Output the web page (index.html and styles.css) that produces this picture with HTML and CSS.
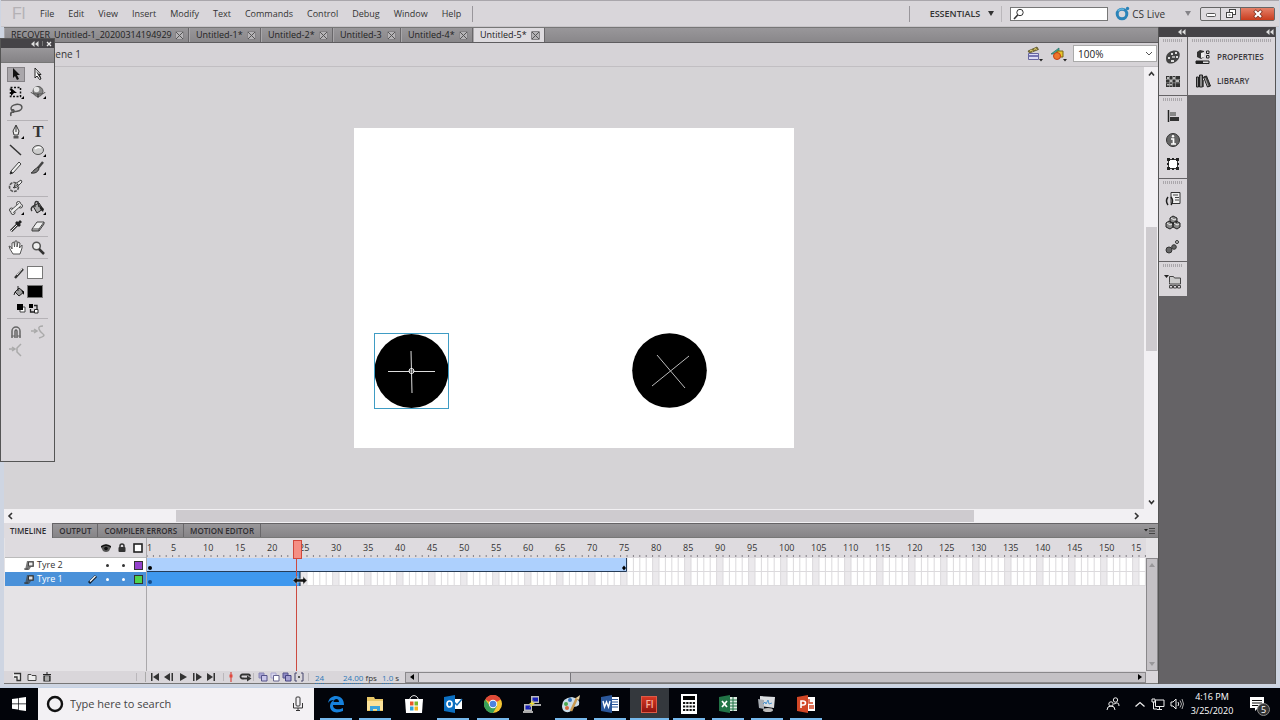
FILE: index.html
```html
<!DOCTYPE html>
<html lang="en">
<head>
<meta charset="utf-8">
<title>Untitled-5</title>
<link rel="stylesheet" href="styles.css">
</head>
<body>
<div class="app">
  <header class="menubar">
    <span class="brand">Fl</span>
    <nav class="menus">
      <button>File</button><button>Edit</button><button>View</button><button>Insert</button><button>Modify</button><button>Text</button><button>Commands</button><button>Control</button><button>Debug</button><button>Window</button><button>Help</button>
    </nav>
    <i class="rule"></i>
    <span class="spacer"></span>
    <i class="rule"></i>
    <button class="workspace">ESSENTIALS <i class="caret"></i></button>
    <i class="rule faint"></i>
    <label class="help-search">
      <svg width="12" height="12" viewBox="0 0 12 12" fill="none" stroke="#333"><circle cx="7" cy="4.500" r="3.200"/><path d="M4.700 7 1 11" stroke-width="1.600"/></svg>
      <input type="text" aria-label="Search help">
    </label>
    <button class="cslive">
      <svg width="15" height="15" viewBox="0 0 15 15" fill="none"><circle cx="7" cy="8" r="4.800" stroke="#2b83b8" stroke-width="3"/><path d="M3 5a5 5 0 0 1 6-1.500" stroke="#63b4dc" stroke-width="1.500"/><circle cx="12.500" cy="2.500" r="1.700" fill="#2b83b8"/></svg>
      CS Live <i class="caret grey"></i></button>
    <div class="winbtns">
      <button aria-label="Minimize"><svg width="12" height="10" viewBox="0 0 12 10"><rect x="1.500" y="4.500" width="9" height="3" rx="1" fill="#fff" stroke="#555"/></svg></button>
      <button aria-label="Restore"><svg width="12" height="10" viewBox="0 0 12 10" fill="#fff" stroke="#444"><rect x="4.500" y=".5" width="6" height="5"/><rect x="1.500" y="3.500" width="6" height="5"/><path d="M3.500 6h2"/></svg></button>
      <button class="close" aria-label="Close"><svg width="12" height="10" viewBox="0 0 12 10"><path d="m2.500 1.500 7 7m0-7-7 7" stroke="#7a3020" stroke-width="3.600"/><path d="m3 2 6 6m0-6-6 6" stroke="#fff" stroke-width="2.200"/></svg></button>
    </div>
  </header>

  <div class="workarea">
    <main class="document">
      <div class="tabs">
        <div class="tab wide">RECOVER_Untitled-1_20200314194929<button aria-label="Close tab"></button></div>
        <div class="tab">Untitled-1*<button aria-label="Close tab"></button></div>
        <div class="tab">Untitled-2*<button aria-label="Close tab"></button></div>
        <div class="tab short">Untitled-3<button aria-label="Close tab"></button></div>
        <div class="tab">Untitled-4*<button aria-label="Close tab"></button></div>
        <div class="tab active">Untitled-5*<button aria-label="Close tab"></button></div>
      </div>
      <div class="editbar">
        <span class="scene">Scene 1</span>
        <span class="spacer"></span>
        <button aria-label="Edit scene"><svg width="17" height="16" viewBox="0 0 17 16"><path d="m1 5 9-4 1.500 2.500-9 3.500z" fill="#8b7c35" stroke="#4e461e" stroke-width=".7"/><path d="m3 5 1.500-1 1 1.500M7 3.500 8.500 2.500l1 1.500" stroke="#e5d778" fill="none"/><path d="M1.500 7.500h10v6h-10z" fill="#dcdcf4" stroke="#6665a0"/><path d="M2 10h9" stroke="#7776b4" stroke-width="2"/><path d="M12 13h4l-2 2.500z" fill="#222"/></svg></button>
        <button aria-label="Edit symbols"><svg width="17" height="16" viewBox="0 0 17 16"><path d="m1 8 8-6v6z" fill="#3fa99b" stroke="#236b62" stroke-width=".7"/><path d="M7 5h6v6H7z" fill="#e9c52c" stroke="#7b6615"/><circle cx="7" cy="10" r="3.500" fill="#ee762c" stroke="#c33e16"/><path d="M13 13h4l-2 2.500z" fill="#222"/></svg></button>
        <select class="zoom" aria-label="Zoom"><option>100%</option></select>
      </div>
      <div class="viewport">
        <div class="pasteboard">
          <div class="canvas">
            <svg class="tyre tyre-one" width="75" height="76" viewBox="0 0 75 76"><circle cx="37.500" cy="38" r="37"/><rect x=".5" y=".5" width="74" height="75" fill="none" stroke="#3f9cc4"/><path d="M14 38.500h47M37 18l1 42" stroke="#ddd"/><circle cx="37.500" cy="38" r="2.500" stroke="#fff"/><path d="M37.500 35v6M35 38h5" stroke="#fff" stroke-width=".7"/></svg>
            <svg class="tyre tyre-two" width="75" height="76" viewBox="0 0 75 76"><circle cx="37.500" cy="37.500" r="37.300"/><path d="m20 53 37-30M25 22l28 33" stroke="#bbb"/></svg>
          </div>
        </div>
        <div class="vscroll"><svg width="11" height="14" viewBox="0 0 11 14"><path d="m3 8.500 2.500-3 2.500 3" fill="none" stroke="#333" stroke-width="1.600"/></svg><i></i><svg class="end" width="11" height="14" viewBox="0 0 11 14"><path d="m3 5.500 2.500 3 2.500-3" fill="none" stroke="#333" stroke-width="1.600"/></svg></div>
        <div class="hscroll"><svg width="14" height="12" viewBox="0 0 14 12"><path d="M8 3 5 6l3 3" fill="none" stroke="#333" stroke-width="1.600"/></svg><i></i><svg class="end" width="14" height="12" viewBox="0 0 14 12"><path d="m5 3 3 3-3 3" fill="none" stroke="#333" stroke-width="1.600"/></svg></div>
      </div>

      <section class="timeline">
        <div class="panel-tabs">
          <button class="active">TIMELINE</button><button>OUTPUT</button><button>COMPILER ERRORS</button><button>MOTION EDITOR</button>
          <span class="spacer"></span>
          <svg width="12" height="8" viewBox="0 0 12 8"><path d="M0 2h4L2 4.500z" fill="#222"/><path d="M5 1.500h6M5 4h6M5 6.500h6" stroke="#444"/></svg>
        </div>
        <div class="frames">
          <div class="layers">
            <div class="layer-head">
              <svg width="10" height="10" viewBox="0 0 10 10"><path d="M0 4Q5-1 10 4L8 8Q5 10 2 8z" fill="#555"/><path d="M0 4Q5 0 10 4" fill="none" stroke="#111" stroke-width="1.400"/><circle cx="5" cy="5.500" r="1.800" fill="#111"/></svg>
              <svg width="10" height="10" viewBox="0 0 10 10"><path d="M3 5V3a2 2 0 0 1 4 0v2" fill="none" stroke="#333" stroke-width="1.500"/><rect x="1.500" y="4" width="7" height="5" rx="1" fill="#333"/></svg>
              <svg width="10" height="10" viewBox="0 0 10 10"><rect x="1" y="1" width="8" height="8" fill="#fff" stroke="#222" stroke-width="1.600"/></svg>
            </div>
            <div class="layer"><svg width="12" height="11" viewBox="0 0 12 11"><path d="M4 1h7v6H8l-2 3H2z" fill="#777"/><path d="M5.500 2H10v4H5.500z" fill="#eee" stroke="#444"/><path d="M1 9h4" stroke="#444"/></svg><span>Tyre 2</span><i class="dot"></i><i class="dot"></i><i class="swatch purple"></i></div>
            <div class="layer selected"><svg width="12" height="11" viewBox="0 0 12 11"><path d="M4 1h7v6H8l-2 3H2z" fill="#435a70"/><path d="M5.500 2H10v4H5.500z" fill="#ddd" stroke="#333"/><path d="M1 9h4" stroke="#333"/></svg><span>Tyre 1</span><svg class="pencil" width="12" height="11" viewBox="0 0 12 11"><path d="m2 9 7-7" stroke="#17232f" stroke-width="3"/><path d="m3 7.500 5.500-5.500" stroke="#fff" stroke-width="1.200"/></svg><i class="dot"></i><i class="dot"></i><i class="swatch green"></i></div>
          </div>
          <div class="tracks">
            <div class="ruler"><span class="first">1</span><span>5</span><span>10</span><span>15</span><span>20</span><span>25</span><span>30</span><span>35</span><span>40</span><span>45</span><span>50</span><span>55</span><span>60</span><span>65</span><span>70</span><span>75</span><span>80</span><span>85</span><span>90</span><span>95</span><span>100</span><span>105</span><span>110</span><span>115</span><span>120</span><span>125</span><span>130</span><span>135</span><span>140</span><span>145</span><span>150</span><span>15</span></div>
            <svg class="ticks" width="100%" height="4"><defs><pattern id="ticks" width="32" height="4" patternUnits="userSpaceOnUse"><path d="M6.400 1v2M12.800 1v2M19.200 1v2M25.600 1v2M32 1v2M0 1v2" stroke="#77747a" stroke-width=".9"/></pattern></defs><rect width="100%" height="4" fill="url(#ticks)"/></svg>
            <svg class="cells" width="100%" height="28"><defs><pattern id="cells" width="32" height="14" patternUnits="userSpaceOnUse"><path d="M0 0h32v14H0z" fill="#fff"/><path d="M25.600 0H32v14h-6.400z" fill="#ebe9ec"/><path d="M6.400 0v14M12.800 0v14M19.200 0v14M25.600 0v14M32 0v14M0 0v14M0 13.500h32" stroke="#dcdadd"/></pattern></defs><rect width="100%" height="28" fill="url(#cells)"/><rect width="480" height="14" fill="#add0fd"/><path d="M0 13.500h479.500V0" fill="none" stroke="#263c57"/><rect y="14" width="153" height="14" fill="#3f98ee"/><circle cx="3" cy="10" r="2"/><circle cx="3" cy="24" r="2" fill="#174c86"/><path d="m477 7.500 2 2.500-2 2.500-2-2.500z"/><path d="M153 14v14" stroke="#122b45"/></svg>
            <i class="playhead"></i>
            <svg class="cursor" width="14" height="9" viewBox="0 0 14 9"><path d="m0 4.500 4-4V3h6V.5l4 4-4 4V6H4v2.500z" fill="#111" stroke="#eee" stroke-width=".5"/></svg>
          </div>
          <div class="frame-scroll"><i></i><i class="down"></i></div>
        </div>
        <div class="controls">
          <div class="layer-tools">
            <button aria-label="New layer"><svg width="10" height="10" viewBox="0 0 10 10"><path d="M1 1.500h7.500v7H5L1 5z" fill="#eee"/><path d="M2 1.500h6.500v7H5V5H2" fill="none" stroke="#333" stroke-width="1.300"/></svg></button>
            <button aria-label="New folder"><svg width="10" height="10" viewBox="0 0 10 10"><path d="M1 2.500h3l1 1h4v5H1z" fill="#eee" stroke="#444"/></svg></button>
            <button aria-label="Delete layer"><svg width="10" height="10" viewBox="0 0 10 10"><path d="M1 2.500h8M4 1h2M2 4h6v5H2z" fill="#777" stroke="#222" stroke-width="1.200"/><path d="M4 4v5M6 4v5" stroke="#ddd"/></svg></button>
            <span class="spacer"></span><i class="rule faint"></i>
          </div>
          <div class="play">
            <button aria-label="First frame"><svg width="10" height="10" viewBox="0 0 10 10"><path d="M1 1h1.500v8H1zM9 1v8L3 5z"/></svg></button>
            <button aria-label="Step back"><svg width="10" height="10" viewBox="0 0 10 10"><path d="M6 1v8L0 5zM7.500 1H9v8H7.500z"/></svg></button>
            <button aria-label="Play"><svg width="10" height="10" viewBox="0 0 10 10"><path d="m2 1 7 4-7 4z"/></svg></button>
            <button aria-label="Step forward"><svg width="10" height="10" viewBox="0 0 10 10"><path d="M1 1h1.500v8H1zM4 1l6 4-6 4z"/></svg></button>
            <button aria-label="Last frame"><svg width="10" height="10" viewBox="0 0 10 10"><path d="m1 1 6 4-6 4zM7.500 1H9v8H7.500z"/></svg></button>
          </div>
          <i class="rule faint"></i>
          <button aria-label="Center frame"><svg width="8" height="10" viewBox="0 0 8 10"><path d="M4 0v10" stroke="#d62a20"/><path d="M2.500 2.500h3v3h-3z" fill="#e0493f"/></svg></button>
          <button aria-label="Loop"><svg width="13" height="10" viewBox="0 0 13 10"><path d="M5 6.500H3.500a2 2 0 0 1 0-4H9.500q1.500 0 1.500 2" fill="none" stroke="#333" stroke-width="1.800"/><path d="M5 6.500h4" stroke="#333" stroke-width="1.800"/><path d="m8 3.500 4.500 3L8 9.500z" fill="#333"/></svg></button>
          <i class="rule faint"></i>
          <div class="onion">
            <button aria-label="Onion skin"><svg width="10" height="10" viewBox="0 0 10 10"><path d="M1 1h5v5H1z" fill="#a6a2d3" stroke="#8886b5"/><path d="M3.500 3.500H9V9H3.500z" fill="#c9c6ea" stroke="#55538a"/></svg></button>
            <button aria-label="Onion outlines"><svg width="10" height="10" viewBox="0 0 10 10"><path d="M1 1h5v5H1z" fill="#d8d6ee" stroke="#a8a6cc"/><path d="M3.500 3.500H9V9H3.500z" fill="#fff" stroke="#67658f"/></svg></button>
            <button aria-label="Edit multiple"><svg width="10" height="10" viewBox="0 0 10 10"><path d="M1 1h5v5H1z" fill="#8f8bc6" stroke="#55538a"/><path d="M3.500 3.500H9V9H3.500z" fill="#a6a2d3" stroke="#444280"/></svg></button>
            <button aria-label="Modify markers"><svg width="10" height="10" viewBox="0 0 10 10"><path d="M3 1H1v8h2M7 1h2v8H7" fill="none" stroke="#45446d"/><path d="M4 4h2v2H4z" fill="#555"/></svg></button>
          </div>
          <i class="rule faint"></i>
          <span class="stat now"><b>24</b></span><span class="stat fps"><b>24.00</b> fps</span><span class="stat time"><b>1.0</b> s</span>
          <div class="track-scroll"><button aria-label="Scroll left"><svg width="10" height="8" viewBox="0 0 10 8"><path d="M7 1v6L3 4z"/></svg></button><i></i><svg class="end" width="10" height="8" viewBox="0 0 10 8"><path d="M3 1v6l4-3z"/></svg></div>
        </div>
      </section>
    </main>

    <aside class="dock">
      <div class="dock-head"><span><svg width="8" height="6" viewBox="0 0 8 6"><path d="M3.500 0v6L0 3zM7.500 0v6L4 3z" fill="#ddd"/></svg></span><span><svg width="8" height="6" viewBox="0 0 8 6"><path d="M3.500 0v6L0 3zM7.500 0v6L4 3z" fill="#ddd"/></svg></span></div>
      <div class="dock-cols">
        <div class="icon-col">
          <div class="group">
            <button aria-label="Color"><svg width="16" height="16" viewBox="0 0 16 16"><path d="M1 9c0-5 5-7.500 9-7.500 5 0 5.500 4 4 7.500s-5 5.500-9 5.500C2 14.500 1 12 1 9z" fill="#444"/><path d="M3 8h2v2H3zM6 4h2v2H6zM10 3h2v2h-2zM11 7h2v2h-2zM6 11h3v2H6z" fill="#ddd"/><path d="M7 7h3v2H7z" fill="#aaa"/></svg></button>
            <button aria-label="Swatches"><svg width="16" height="16" viewBox="0 0 16 16"><path d="M1 3h14v11H1z" fill="#333"/><path d="M2 4h2v2H2zM8 4h2v2H8zM5 7h2v2H5zM11 7h3v2h-3zM2 11h5v1.500H2z" fill="#bbb"/><path d="M4.500 3v11M7.500 3v11M10.500 3v11M1 6.500h14M1 9.800h14" stroke="#999" stroke-width=".7"/></svg></button>
          </div>
          <div class="group">
            <button aria-label="Align"><svg width="16" height="16" viewBox="0 0 16 16"><path d="M3.500 2v12" stroke="#222" stroke-width="1.500"/><path d="M5 4h6v4H5z" fill="#888"/><path d="M5 9h9v4H5z" fill="#333"/></svg></button>
            <button aria-label="Info"><svg width="16" height="16" viewBox="0 0 16 16"><circle cx="8" cy="8" r="6.500" fill="#666" stroke="#333"/><path d="M6 7h2.500v5M6 12h5" stroke="#fff" stroke-width="1.700" fill="none"/><circle cx="8" cy="4.300" r="1.200" fill="#fff"/></svg></button>
            <button aria-label="Transform"><svg width="16" height="16" viewBox="0 0 16 16"><path d="M3.500 3.500h9v9h-9z" fill="#fff" stroke="#333"/><path d="M2 2h3v3H2zM11 2h3v3h-3zM2 11h3v3H2zM11 11h3v3h-3zM7 2h2v2H7zM7 12h2v2H7zM2 7h2v2H2zM12 7h2v2h-2z" fill="#222"/></svg></button>
          </div>
          <div class="group">
            <button aria-label="Code snippets"><svg width="16" height="16" viewBox="0 0 16 16"><path d="M6 1.500h9v11H6z" fill="#eee" stroke="#333"/><path d="M8 4h5M10 6.500h4M10 9h4" stroke="#444"/><path d="M3 6Q0 10 3 14M6 6q3 4 0 8" stroke="#222" stroke-width="1.500" fill="none"/></svg></button>
            <button aria-label="Components"><svg width="16" height="16" viewBox="0 0 16 16" stroke="#222" fill="#888"><path d="m5 3 3-2 4 2v4L9 9 5 7zM1 8l3-2 4 2v4l-3 2-4-2zM8 8l3-2 4 2v4l-3 2-4-2z"/><path d="m6 3 3 2 2-1M2 8l3 2 2-1m2-1 3 2 2-1" stroke="#eee"/></svg></button>
            <button aria-label="Motion presets"><svg width="16" height="16" viewBox="0 0 16 16" fill="#666" stroke="#333"><circle cx="4" cy="11" r="3"/><circle cx="9" cy="8" r="2.300"/><circle cx="12" cy="3" r="1.500" fill="#ccc"/></svg></button>
          </div>
          <div class="group">
            <button aria-label="Project"><svg width="18" height="16" viewBox="0 0 18 16"><path d="M0 1h5L2.500 4z" fill="#222"/><path d="M5.500 8.500v-6h4l1 1.500h6v6h-11z" fill="#ccc" stroke="#444"/><path d="M5.500 11.500h3v2.500h-3zM9.500 11.500h3v2.500h-3zM13.500 11.500h3v2.500h-3z" fill="none" stroke="#444"/></svg></button>
          </div>
        </div>
        <div class="name-col">
          <div class="group">
            <button><svg width="16" height="16" viewBox="0 0 16 16"><path d="m2 3 3-2 4 1v6L6 10 2 8z" fill="#333"/><path d="m6 4 3-1v5L6 9z" fill="#eee"/><path d="M11.500 2h2.500v2.500h-2.500zM11.500 6.500H14V9h-2.500zM1 12h13v2.500H1z" fill="#ddd" stroke="#222"/><path d="M1 12h7v2.500H1z" fill="#222"/></svg>PROPERTIES</button>
            <button><svg width="16" height="16" viewBox="0 0 16 16"><path d="M1.500 4h2v10h-2zM4.500 2h3v12h-3z" fill="#888" stroke="#222"/><path d="m8.500 4 3-1 4 10-3 1z" fill="#444" stroke="#222"/><path d="M8 7v7" stroke="#333" stroke-width="1.500"/><path d="m10 5 3 8" stroke="#aaa"/></svg>LIBRARY</button>
          </div>
        </div>
      </div>
    </aside>
  </div>

  <aside class="tools">
    <div class="tools-head"><svg width="8" height="6" viewBox="0 0 8 6"><path d="M3.500 0v6L0 3zM7.500 0v6L4 3z" fill="#ddd"/></svg><i></i><svg width="6" height="6" viewBox="0 0 6 6"><path d="m1 1 4 4m0-4L1 5" stroke="#eee" stroke-width="1.300"/></svg></div>
    <div class="tools-grip"></div>
    <div class="toolset">
      <button class="on" aria-label="Selection"><svg width="16" height="16" viewBox="0 0 16 16"><path d="m5 2 7 7H9l2 4-2 1-2-4-2 2z" fill="#111"/></svg></button>
      <button aria-label="Subselection"><svg width="16" height="16" viewBox="0 0 16 16"><path d="m5 2 6 6.500H9l2 4.500-1.500.5L7 10l-2 2z" fill="#fff" stroke="#222"/><path d="m6 5 4 4 1 4-3-4z" fill="#222"/></svg></button>
      <button aria-label="Free transform"><svg width="16" height="16" viewBox="0 0 16 16"><path d="M2.500 3.500h10v9h-10z" fill="none" stroke="#111" stroke-width="1.500" stroke-dasharray="2 1.500"/><path d="m3 4 6 5H6l-3 3z"/><path d="M13 15h3v-3z"/></svg></button>
      <button aria-label="3D rotation"><svg width="16" height="16" viewBox="0 0 16 16"><circle cx="8" cy="7.500" r="5" fill="#888" stroke="#555"/><circle cx="6.500" cy="5.500" r="2.800" fill="#e4e4e4"/><path d="M1 8q0 2 7 2t7-2" fill="none" stroke="#555"/><path d="M8 10v4" stroke="#333"/><path d="M13 15h3v-3z"/></svg></button>
      <button aria-label="Lasso"><svg width="16" height="16" viewBox="0 0 16 16" fill="none" stroke="#555" stroke-width="1.500"><ellipse cx="8.500" cy="6" rx="5.500" ry="3.500" transform="rotate(-10 8 6)"/><path d="M3 8q3-1 3 1t-2 1q-2 1-1 4"/></svg></button>
    </div>
    <div class="toolset">
      <button aria-label="Pen"><svg width="16" height="16" viewBox="0 0 16 16"><path d="M8 1 5 7l1 4h4l1-4z" fill="#eee" stroke="#333"/><path d="M8 2v6" stroke="#333"/><path d="M5.500 12h5v2.500h-5z" fill="#555"/><path d="M13 15h3v-3z"/></svg></button>
      <button class="type" aria-label="Text">T</button>
      <button aria-label="Line"><svg width="16" height="16" viewBox="0 0 16 16"><path d="m2 3 11 10" stroke="#333" stroke-width="1.500"/></svg></button>
      <button aria-label="Oval"><svg width="16" height="16" viewBox="0 0 16 16"><ellipse cx="8" cy="8" rx="5.500" ry="4.500" fill="#ccc" stroke="#555"/><path d="M5 7q3-3 6-1" stroke="#fff" fill="none" stroke-width="1.500"/><path d="M13 15h3v-3z"/></svg></button>
      <button aria-label="Pencil"><svg width="16" height="16" viewBox="0 0 16 16"><path d="m3 11 8-9 2 2-8 9-3 1z" fill="#eee" stroke="#444"/><path d="m2 14 1-3 2 2z" fill="#222"/></svg></button>
      <button aria-label="Brush"><svg width="16" height="16" viewBox="0 0 16 16"><path d="m13 2-5 6" stroke="#444" stroke-width="2.500"/><path d="M8 7 4 10q-1 2-3 3 6 1 8-4z" fill="#777" stroke="#333"/><path d="M13 15h3v-3z"/></svg></button>
      <button aria-label="Deco"><svg width="16" height="16" viewBox="0 0 16 16"><path d="m7 6 6-4 1 2-5 5-3 1z" fill="#eee" stroke="#444"/><circle cx="6" cy="9" r="4.500" fill="none" stroke="#555" stroke-width="1.600" stroke-dasharray="3 1"/><path d="m5 10 5-4" stroke="#333"/></svg></button>
    </div>
    <div class="toolset">
      <button aria-label="Bone"><svg width="16" height="16" viewBox="0 0 16 16"><g fill="#eee" stroke="#444"><circle cx="3.500" cy="10" r="2"/><circle cx="5" cy="12.500" r="2"/><circle cx="10.500" cy="3.500" r="2"/><circle cx="12.500" cy="6" r="2"/></g><path d="m4 11.500 8-7" stroke="#444" stroke-width="4"/><path d="m3.500 12 9-8" stroke="#eee" stroke-width="2.500"/><path d="M13 15h3v-3z"/></svg></button>
      <button aria-label="Paint bucket"><svg width="16" height="16" viewBox="0 0 16 16"><path d="m3 6 6-3 4 6-6 4z" fill="#aaa" stroke="#222"/><path d="M5 7Q4 0 8 2l1 5M3 6q-3 3-1 5" fill="none" stroke="#333" stroke-width="1.400"/><path d="m9 5 5 4-1 3-3-3z" fill="#222"/><path d="M13 15h3v-3z"/></svg></button>
      <button aria-label="Eyedropper"><svg width="16" height="16" viewBox="0 0 16 16"><path d="m3 13 7-7" stroke="#333" stroke-width="3"/><path d="m3 13 6-6" stroke="#eee"/><path d="m8 4 4 4M10 6l3-3" stroke="#222" stroke-width="2.800"/></svg></button>
      <button aria-label="Eraser"><svg width="16" height="16" viewBox="0 0 16 16"><path d="m2 11 5-7h7l-5 7z" fill="#eee" stroke="#444"/><path d="M2 11v2h7v-2m0 2 5-7V4" fill="#999" stroke="#444"/></svg></button>
    </div>
    <div class="toolset">
      <button aria-label="Hand"><svg width="16" height="16" viewBox="0 0 16 16"><path d="M5 14 2 9 1 6l2 1 1 2V3l2-1 .5 5L7 1h2v6l1-5 2 1-.5 5L14 5v3l-2 6z" fill="#fff" stroke="#555"/></svg></button>
      <button aria-label="Zoom"><svg width="16" height="16" viewBox="0 0 16 16"><circle cx="6.500" cy="6" r="3.800" fill="#eee" stroke="#555" stroke-width="1.500"/><path d="m9 9 5 5" stroke="#333" stroke-width="2.500"/></svg></button>
    </div>
    <div class="toolset colors">
      <div><svg width="12" height="14" viewBox="0 0 12 14"><path d="m2 12 8-9" stroke="#333" stroke-width="2.400"/><path d="m4 9 5-6" stroke="#eee"/></svg><i class="well white"></i></div>
      <div><svg width="12" height="14" viewBox="0 0 12 14"><path d="m2 7 4-4 5 4-5 4z" fill="#999" stroke="#222"/><path d="M5 6V1M2 7l-1 3" stroke="#222"/><path d="m8 5 3 2v3z"/></svg><i class="well black"></i></div>
      <div class="swap"><svg width="10" height="12" viewBox="0 0 10 12"><path d="M4 4h5v5H4z" fill="#fff" stroke="#444"/><path d="M1 1h6v6H1z"/></svg><svg width="10" height="12" viewBox="0 0 10 12"><path d="M0 1h4v4H0z"/><path d="M5.500 6.500H9V10H5.500z" fill="#fff" stroke="#222"/><path d="M5 2.500h3V6M1.500 6v3H5" fill="none" stroke="#222" stroke-width="1.300"/></svg></div>
    </div>
    <div class="toolset options">
      <button aria-label="Snap"><svg width="16" height="16" viewBox="0 0 16 16"><path d="M4 14V7a4 4 0 0 1 8 0v7M7 14V7q1-2 2 0v7" fill="none" stroke="#666" stroke-width="1.500"/><path d="M3.500 12H7m2 0h3.500" stroke="#666"/></svg></button>
      <button aria-label="Smooth"><svg width="16" height="16" viewBox="0 0 16 16"><path d="M1 7h5M4 5l3 2-3 2M13 2Q8 2 9 5t4 5-4 4" fill="none" stroke="#aaa" stroke-width="1.500"/></svg></button>
      <button aria-label="Straighten"><svg width="16" height="16" viewBox="0 0 16 16"><path d="M1 7h5M4 5l3 2-3 2M13 2 9 6v4l4 4" fill="none" stroke="#aaa" stroke-width="1.500"/></svg></button>
    </div>
  </aside>
</div>

<footer class="taskbar">
  <button class="start" aria-label="Start"><svg width="14" height="14" viewBox="0 0 14 14" fill="#fff"><path d="m0 2 6-.8v5.300H0zM6.700 1.100 14 0v6.500H6.700zM0 7.200h6v5.300l-6-.8zM6.700 7.200H14V14l-7.300-1.100z"/></svg></button>
  <label class="search"><svg width="18" height="18" viewBox="0 0 18 18"><circle cx="9" cy="9" r="7" fill="none" stroke="#111" stroke-width="2.400"/></svg><input type="text" placeholder="Type here to search" aria-label="Search Windows"><svg width="12" height="16" viewBox="0 0 12 16" fill="none" stroke="#333"><rect x="4" y="1" width="4" height="9" rx="1"/><path d="M1.500 7v5h9V7M6 12v3M4 14.500h4"/></svg></label>
  <div class="apps">
    <button class="run" aria-label="Edge"><svg width="18" height="18" viewBox="0 0 18 18"><path d="M1 8C2 3 5 1 9 1c5 0 8 3.500 8 9H6c0 5 6 5 10 3v3C9 19 3 17 3 11c0-3 2-5 4-6-3 0-5 1-6 3zm5.500-1H12c0-4-5-4-5.500 0z" fill="#1681dc"/></svg></button>
    <button class="run" aria-label="Explorer"><svg width="18" height="18" viewBox="0 0 18 18"><path d="M1 2h7l1 2h8v12H1z" fill="#e8c768"/><path d="M1 6h16v9H1z" fill="#fbe29a"/><path d="M4 16v-5h10v5h-3v-2H7v2z" fill="#3ba4dc"/></svg></button>
    <button aria-label="Store"><svg width="20" height="20" viewBox="0 0 20 20"><path d="M6 6V4q4-5 8 0v2" stroke="#ddd" fill="none"/><path d="M1 5h18l-1 14H2z" fill="#fff"/><path d="M6 7.500h3.500v4H6z" fill="#e9572b"/><path d="M10.500 7.500H14v4h-3.500z" fill="#7ab82c"/><path d="M6 12.500h3.500v4H6z" fill="#2da3dc"/><path d="M10.500 12.500H14v4h-3.500z" fill="#f2b51d"/></svg></button>
    <button class="run" aria-label="Outlook"><svg width="20" height="18" viewBox="0 0 20 18"><path d="M9 4h10v10H9z" fill="#fff"/><path d="m10 6 4 4 5-6" stroke="#1670b8" fill="none" stroke-width="1.500"/><path d="m1 2 11-2v18L1 16z" fill="#0c70c2"/><ellipse cx="6.500" cy="9" rx="2.500" ry="3" fill="none" stroke="#fff" stroke-width="1.700"/></svg></button>
    <button class="run" aria-label="Chrome"><svg width="18" height="18" viewBox="0 0 18 18"><circle cx="9" cy="9" r="9" fill="#f4c534"/><path d="M9 9 1.200 4.500A9 9 0 0 1 16.800 4.500z" fill="#df4938"/><path d="M1.200 4.500A9 9 0 0 0 9 18l4-7H6z" fill="#39a058"/><circle cx="9" cy="9" r="4.200" fill="#fff"/><circle cx="9" cy="9" r="3.300" fill="#4c83df"/></svg></button>
    <button aria-label="PuTTY"><svg width="18" height="18" viewBox="0 0 18 18"><path d="M8 1h8v7H8zM1 9h8v7H1z" fill="#bbb"/><path d="M9.500 2.500H15v4H9.500zM2.500 10.500H8v4H2.500z" fill="#1720b8"/><path d="M7 9h11v2H7zM0 16h10v2H0z" fill="#aaa"/><path d="m11 5-5 4h3l-3 4 6-5H9z" fill="#f0df2e"/></svg></button>
    <button class="run" aria-label="Paint"><svg width="20" height="20" viewBox="0 0 20 20"><path d="M1 12Q1 4 11 3q9 2 7 8-2 2-6 2-1 6-7 5-4-1-4-6z" fill="#cbdde9"/><circle cx="5" cy="10" r="2" fill="#4aa74f"/><circle cx="9" cy="6" r="2" fill="#3373bb"/><circle cx="6" cy="14" r="2" fill="#d6673c"/><path d="m10 17 6-13" stroke="#c99a52" stroke-width="2.500"/><path d="m15 4 4-3-1 5z" fill="#ecd6a5"/></svg></button>
    <button class="run" aria-label="Word"><svg width="20" height="18" viewBox="0 0 20 18"><path d="M9 2h10v14H9z" fill="#fff"/><path d="M12 4.500h6M12 7h6m-6 2.500h6M12 12h6" stroke="#2b579a"/><path d="m1 2 11-2v18L1 16z" fill="#2b579a"/><path d="m3 6 1.500 6 2-5 2 5L10 6" stroke="#fff" fill="none" stroke-width="1.400"/></svg></button>
    <button class="run current" aria-label="Flash"><span class="flash">Fl</span></button>
    <button class="run" aria-label="Calculator"><svg width="16" height="20" viewBox="0 0 16 20"><path d="M0 0h16v20H0z" fill="#fff"/><path d="M2 2h12v4H2z"/><path d="M2 9h12M2 12.500h12M2 16h12" stroke="#111" stroke-width="2" stroke-dasharray="2.250 1"/></svg></button>
    <button class="run" aria-label="Excel"><svg width="20" height="18" viewBox="0 0 20 18"><path d="M10 2h9v14h-9z" fill="#dcebe1"/><path d="M12 5h7m-7 3h7m-7 3h7m-7 3h7M15 2v14" stroke="#217346"/><path d="m1 2 11-2v18L1 16z" fill="#217346"/><path d="m4 6 5 6M9 6l-5 6" stroke="#fff" stroke-width="1.700"/></svg></button>
    <button class="run" aria-label="Monitor"><svg width="20" height="18" viewBox="0 0 20 18"><path d="m3 1 15 1-1 11-14-2z" fill="#dadde0"/><path d="m1 4 6 1v9l-5-1z" fill="#a7acb3"/><path d="m6 9 2-2 1 2 2-4 1 4 3-1" stroke="#4a93ce" fill="none"/><ellipse cx="11" cy="15" rx="5" ry="2" fill="#bbb"/></svg></button>
    <button class="run" aria-label="PowerPoint"><svg width="20" height="18" viewBox="0 0 20 18"><path d="M10 2h9v14h-9z" fill="#fff"/><path d="M13 4v4h4M13 11h5M13 13h5" stroke="#d24726" fill="none" stroke-width="1.400"/><path d="m1 2 11-2v18L1 16z" fill="#d24726"/><path d="M5 13V6h2q2.500 0 2.500 2T7 10H5" stroke="#fff" fill="none" stroke-width="1.600"/></svg></button>
  </div>
  <span class="spacer"></span>
  <div class="tray">
    <svg width="14" height="14" viewBox="0 0 14 14" fill="none" stroke="#eee"><circle cx="5" cy="7" r="2.200"/><path d="M1 13q0-4 4-4t4 4"/><circle cx="9.500" cy="3" r="2.200"/><path d="M8 7q5-3 5 2"/></svg>
    <svg class="up" width="12" height="12" viewBox="0 0 12 12"><path d="m1.500 8.500 4.500-4 4.500 4" fill="none" stroke="#eee" stroke-width="1.300"/></svg>
    <svg width="14" height="14" viewBox="0 0 14 14" fill="none" stroke="#eee"><path d="M4.500 3H13v6.500H4.500zM8.500 10v2.500M6 12.500h5M1 2h3v3H1zM2.500 5v7H6"/></svg>
    <svg width="14" height="14" viewBox="0 0 14 14" fill="none" stroke="#eee"><path d="M1 5h2l3-3v10L3 9H1zM8 5q1.500 2 0 4"/><path d="M10 3.500q3 3.500 0 7M12 2q3 5 0 10" stroke="#aaa"/></svg>
  </div>
  <div class="clock"><span>4:16 PM</span><span>3/25/2020</span></div>
  <button class="notify" aria-label="Notifications"><svg width="14" height="14" viewBox="0 0 14 14"><path d="M0 0h14v11H8l-3 3v-3H0z" fill="#fff"/><path d="M2 3.500h10M2 6h10M2 8.500h6" stroke="#111"/></svg><span>5</span></button>
</footer>
</body>
</html>
```

FILE: styles.css
```css
* { box-sizing: border-box; }
body { margin: 0; min-height: 100vh; display: flex; flex-direction: column; background: #a9b7c9; font-family: "Open Sans", "Noto Sans", sans-serif; font-size: 10px; line-height: 14px; color: #333; }
button { font: inherit; color: inherit; background: none; border: 0; padding: 0; margin: 0; display: inline-flex; align-items: center; justify-content: center; }
svg { display: block; flex: none; }
.spacer { flex: 1; }
.rule { width: 1px; height: 16px; background: #99969b; }
.rule.faint { background: #bab7bb; }
.caret { border: 3px solid transparent; border-top: 5px solid #333; border-bottom: 0; }
.caret.grey { border-top-color: #858388; }

.app { flex: 1; position: relative; display: flex; flex-direction: column; padding: 0 4px 3px; background: #ced5e2; border-bottom: 1px solid #c5d3e6; }
.menubar { height: 27px; display: flex; align-items: center; margin: 0 -3px; padding: 2px 4px 2px 11px; background: #d9d6da; border-top: 1px solid #a9a6ab; border-bottom: 1px solid #c8c5c9; color: #333; }
.brand { width: 25px; font: 16px/20px "Liberation Sans", sans-serif; color: #b4b1b5; }
.menus { display: flex; gap: 14px; padding-left: 3px; margin-right: 11px; font-size: 9px; }
.workspace { font-weight: 600; gap: 8px; margin: 0 7px 0 20px; font-size: 9px; }
.help-search { display: flex; align-items: center; margin-left: 8px; width: 98px; height: 14px; padding-left: 2px; background: #fff; border: 1px solid #777; }
.help-search input { min-width: 0; flex: 1; border: 0; background: none; height: 10px; padding: 0; outline: 0; }
.cslive { margin-left: 7px; gap: 2px; }
.cslive .caret { margin-left: 18px; }
.winbtns { display: flex; margin-left: 9px; border: 1px solid #666; border-radius: 2px; background: #dedbdf; }
.winbtns button { width: 20px; height: 12px; border-right: 1px solid #666; }
.winbtns .close { width: 33px; border: 0; background: linear-gradient(#e58068, #c93d1e); }

.workarea { flex: 1; display: flex; background: #656366; }
.document { flex: 1; min-width: 0; display: flex; flex-direction: column; background: #d6d3d7; border-right: 1px solid #555; }
.tabs { height: 16px; display: flex; background: linear-gradient(#99979a, #89878a); border-top: 1px solid #777; border-bottom: 1px solid #5e5c5f; color: #222; }
.tab { width: 72px; display: flex; align-items: center; justify-content: space-between; padding: 0 4px 0 6px; border-right: 1px solid #69676a; border-left: 1px solid #a9a7aa; white-space: nowrap; font-size: 9px; }
.tab.wide { width: 185px; }
.tab.short { width: 68px; }
.tab.active { background: #dedbdf; }
.tab button { width: 9px; height: 9px; border: 1px solid #858386; border-radius: 1px; background: linear-gradient(45deg, transparent 44%, #555 44% 56%, transparent 56%), linear-gradient(-45deg, transparent 44%, #555 44% 56%, transparent 56%), #b5b3b6; }
.editbar { height: 24px; display: flex; align-items: center; gap: 6px; padding: 0 1px 2px 41px; border-bottom: 1px solid #c1bec2; }
.zoom { width: 84px; height: 17px; appearance: none; margin: 0; padding: 0 4px; border: 1px solid #aaa; border-radius: 0; font: inherit; color: #222; background: #fff url("data:image/svg+xml,%3Csvg xmlns='http://www.w3.org/2000/svg' width='8' height='6'%3E%3Cpath d='m1 1 3 3 3-3' fill='none' stroke='%23555'/%3E%3C/svg%3E") no-repeat right 3px center; }
.viewport { flex: 1; display: grid; grid-template: 1fr 14px / 1fr 14px; background: #f2f0f3; }
.pasteboard { display: grid; place-items: center; background: #d5d3d6; }
.canvas { position: relative; width: 440px; height: 320px; background: #fff; }
.tyre { position: absolute; top: 205px; }
.tyre-one { left: 20px; }
.tyre-two { left: 278px; }
.vscroll { display: flex; flex-direction: column; align-items: center; }
.vscroll i { height: 28%; width: 11px; margin-top: 146px; background: #cecbcf; }
.vscroll .end { margin-top: auto; }
.hscroll { display: flex; align-items: center; }
.hscroll i { width: 70%; height: 12px; margin-left: 158px; background: #cecbcf; }
.hscroll .end { margin-left: auto; }

.timeline { background: #e5e3e6; }
.panel-tabs { height: 15px; display: flex; align-items: center; padding-right: 2px; background: linear-gradient(#99979a, #868487); border-top: 1px solid #656366; border-bottom: 1px solid #777; font-size: 8px; font-weight: 600; color: #2e2c30; }
.panel-tabs button { height: 100%; padding: 0 6px; border-right: 1px solid #69676a; }
.panel-tabs .active { background: #dedbdf; height: 15px; }
.frames { display: grid; grid-template-columns: 142px 1fr 12px; height: 133px; padding-left: 1px; }
.layers { border-right: 1px solid #aaa8ab; }
.layer-head { height: 20px; display: flex; justify-content: flex-end; align-items: center; gap: 6px; padding-right: 3px; background: #dedbdf; border-bottom: 1px solid #bbb; }
.layer { height: 14px; display: grid; grid-template-columns: 12px 1fr 12px 16px 16px 15px; padding-left: 18px; align-items: center; background: #fff; font-size: 9px; }
.layer span { padding-left: 2px; grid-column: 2; }
.layer .dot { grid-column: 4; }
.layer .dot + .dot { grid-column: 5; }
.layer .swatch { grid-column: 6; }
.layer.selected { background: #4a91d9; color: #fff; }
.dot { width: 3px; height: 3px; border-radius: 2px; background: currentColor; justify-self: center; }
.swatch { width: 9px; height: 9px; border: 1px solid #333; justify-self: center; }
.purple { background: #9542cd; }
.green { background: #4fd44b; }
.tracks { position: relative; min-width: 0; overflow: hidden; }
.ruler { height: 16px; display: flex; overflow: hidden; background: #dedbdf; font-size: 9px; line-height: 20px; }
.ruler span { flex: 0 0 32px; }
.ruler .first { flex-basis: 24px; }
.ticks { background: #dedbdf; }
.playhead { position: absolute; left: 149px; top: 18px; width: 1px; bottom: 0; background: #cc4a40; }
.playhead::before { content: ""; position: absolute; left: -3px; top: -16px; width: 7px; height: 17px; background: #f58f84; border: 1px solid #d0483c; }
.cursor { position: absolute; left: 146px; top: 38px; }
.frame-scroll { margin-top: 20px; display: flex; flex-direction: column; justify-content: space-between; align-items: center; padding: 4px 0; background: #c4c1c5; border: 1px solid #8a888b; }
.frame-scroll i { border: 3px solid transparent; border-bottom: 4px solid #99979a; border-top: 0; }
.frame-scroll .down { border-top: 4px solid #99979a; border-bottom: 0; }
.controls { height: 13px; display: flex; align-items: center; background: #d9d6da; border-bottom: 1px solid #777; font-size: 8px; line-height: 11px; }
.controls > .rule, .layer-tools .rule { height: 8px; }
.layer-tools { width: 142px; display: flex; align-items: center; gap: 5px; padding: 0 8px; border-right: 1px solid #aaa; }
.play { display: flex; gap: 4px; padding: 0 7px 0 4px; fill: #333; }
.controls > button { margin: 0 1px 0 3px; }
.onion { display: flex; gap: 2px; padding: 0 4px; }
.stat b { font-weight: 400; color: #2d78b8; border-bottom: 1px dotted #2d78b8; }
.stat { white-space: nowrap; }
.now { width: 34px; padding-left: 6px; }
.fps { width: 39px; }
.time { width: 23px; }
.track-scroll { flex: 1; height: 11px; display: flex; align-items: center; margin-right: 12px; background: #c4c1c5; border: 1px solid #8a888b; }
.track-scroll button { width: 12px; }
.track-scroll i { width: 153px; height: 9px; background: #dad7db; border: solid #77757a; border-width: 0 1px; }
.track-scroll .end { margin-left: auto; }

.dock { width: 117px; border-right: 1px solid #555; }
.dock-head { height: 10px; display: flex; background: #454347; }
.dock-head span { width: 28px; display: flex; justify-content: flex-end; align-items: center; padding-right: 1px; }
.dock-head span + span { flex: 1; }
.dock-cols { display: flex; gap: 1px; align-items: flex-start; }
.icon-col { width: 28px; display: flex; flex-direction: column; gap: 1px; }
.name-col { flex: 1; }
.group { display: flex; flex-direction: column; padding-bottom: 2px; background: #d9d6da; }
.group::before { content: ""; height: 3px; margin: 2px 4px 3px; background: repeating-linear-gradient(90deg, #aaa7ab 0 1px, transparent 1px 2px); }
.group button { height: 24px; }
.name-col button { justify-content: flex-start; padding-left: 7px; gap: 6px; font-size: 8px; font-weight: 600; color: #3b393d; }

.tools { position: absolute; left: 0; top: 38px; width: 55px; height: 424px; background: #d9d6da; border: 1px solid #555; }
.tools-head { height: 9px; display: flex; align-items: center; justify-content: flex-end; gap: 3px; padding-right: 2px; background: #454347; }
.tools-head i { width: 1px; height: 5px; background: #777; }
.tools-grip { height: 15px; background: linear-gradient(#99979a, #858386); border-bottom: 1px solid #777; }
.toolset { display: grid; grid-template-columns: 20px 20px; grid-auto-rows: 18px; column-gap: 2px; margin: 0 6px; padding: 2px 0 1px; border-bottom: 1px solid #b5b2b6; }
.toolset button { width: 18px; }
.toolset .on { background: #aaa7ab; border: 1px solid #858286; height: 15px; align-self: center; }
.type { font: bold 16px/18px "Liberation Serif", serif; }
.colors { display: block; padding-top: 4px; }
.colors div { height: 19px; display: flex; align-items: center; gap: 2px; padding-left: 6px; }
.colors .swap { height: 16px; gap: 3px; padding-left: 9px; }
.well { width: 16px; height: 13px; border: 1px solid #777; }
.white { background: #fff; }
.black { background: #000; }
.options { border: 0; padding-top: 4px; }

.taskbar { height: 32px; display: flex; align-items: stretch; background: #02040a; color: #fff; }
.start { width: 38px; }
.search { width: 276px; display: flex; align-items: center; gap: 6px; padding: 0 10px 0 8px; background: #f3f1f4; }
.search input { flex: 1; min-width: 0; border: 0; padding: 0; background: none; font: 11px/16px "Open Sans", sans-serif; }
.search input::placeholder { color: #444; opacity: 1; }
.apps { width: 510px; margin-left: 2px; display: grid; grid-template-columns: repeat(13, 1fr); }
.run { background: linear-gradient(#76b9ed, #76b9ed) no-repeat center bottom / 32px 2px; }
.run.current { background-color: #34383d; background-size: 100% 2px; }
.flash { width: 16px; height: 17px; background: linear-gradient(#d73824, #8f1410); border: 1px solid #dc5b48; color: #f8b39d; font-weight: 600; }
.tray { display: flex; align-items: center; gap: 5px; }
.tray .up { margin-left: 9px; }
.clock { width: 56px; display: flex; flex-direction: column; justify-content: center; text-align: center; font-size: 9px; line-height: 14px; }
.notify { position: relative; width: 34px; margin-right: 6px; }
.notify span { position: absolute; right: 4px; bottom: 4px; width: 13px; height: 13px; border: 1px solid #888; border-radius: 50%; background: #333; font-size: 9px; line-height: 11px; }
```
